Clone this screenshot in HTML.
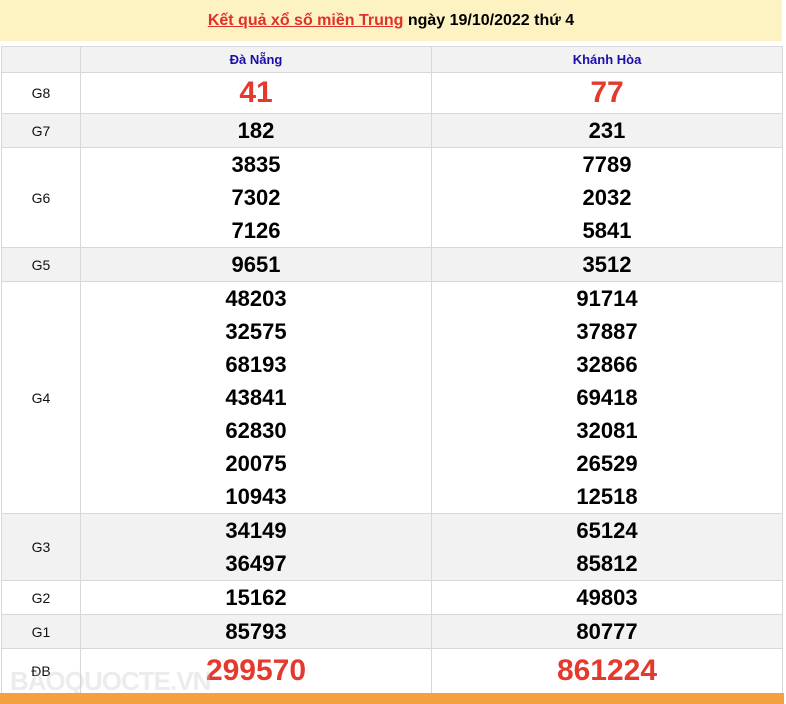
<html><head><style>
body{margin:0;background:#fff;font-family:"Liberation Sans",Arial,sans-serif;width:786px;height:704px;overflow:hidden;position:relative}
.top{position:absolute;left:0;top:0;width:782px;height:41px;background:#fdf2c2;text-align:center;font-weight:bold;font-size:16px;line-height:42px;color:#000}
.top a{color:#e0302a;text-decoration:underline}
table{position:absolute;left:1px;top:46px;border-collapse:collapse;width:782px;table-layout:fixed}
td{border:1px solid #d8d8d8;text-align:center;padding:0;vertical-align:middle}
td.l{width:78px;font-size:14px;color:#111}
.n{font-weight:bold;font-size:22px;line-height:33px;color:#000}
.r{font-weight:bold;font-size:30px;color:#e43a2e}
tr.g td{background:#f2f2f2}
.h a{color:#1a0dab;font-size:13px;font-weight:bold}
.bar{position:absolute;left:0;top:693px;width:784px;height:11px;background:#f5a040}
.wm{position:absolute;left:10px;top:666px;font-size:26px;font-weight:bold;color:rgba(200,200,210,.35);letter-spacing:-1px}
</style></head><body>
<div class="top"><a>Kết quả xổ số miền Trung</a> ngày 19/10/2022 thứ 4</div>
<table>
<tr class="g h" style="height:26px"><td class="l"></td><td><a>Đà Nẵng</a></td><td><a>Khánh Hòa</a></td></tr>
<tr style="height:41px"><td class="l">G8</td><td class="r">41</td><td class="r">77</td></tr>
<tr class="g" style="height:34px"><td class="l">G7</td><td class="n">182</td><td class="n">231</td></tr>
<tr style="height:100px"><td class="l">G6</td><td class="n">3835<br>7302<br>7126</td><td class="n">7789<br>2032<br>5841</td></tr>
<tr class="g" style="height:34px"><td class="l">G5</td><td class="n">9651</td><td class="n">3512</td></tr>
<tr style="height:232px"><td class="l">G4</td><td class="n">48203<br>32575<br>68193<br>43841<br>62830<br>20075<br>10943</td><td class="n">91714<br>37887<br>32866<br>69418<br>32081<br>26529<br>12518</td></tr>
<tr class="g" style="height:67px"><td class="l">G3</td><td class="n">34149<br>36497</td><td class="n">65124<br>85812</td></tr>
<tr style="height:34px"><td class="l">G2</td><td class="n">15162</td><td class="n">49803</td></tr>
<tr class="g" style="height:34px"><td class="l">G1</td><td class="n">85793</td><td class="n">80777</td></tr>
<tr style="height:45px"><td class="l">ĐB</td><td class="r">299570</td><td class="r">861224</td></tr>
</table>
<div class="wm">BAOQUOCTE.VN</div>
<div class="bar"></div>
</body></html>
